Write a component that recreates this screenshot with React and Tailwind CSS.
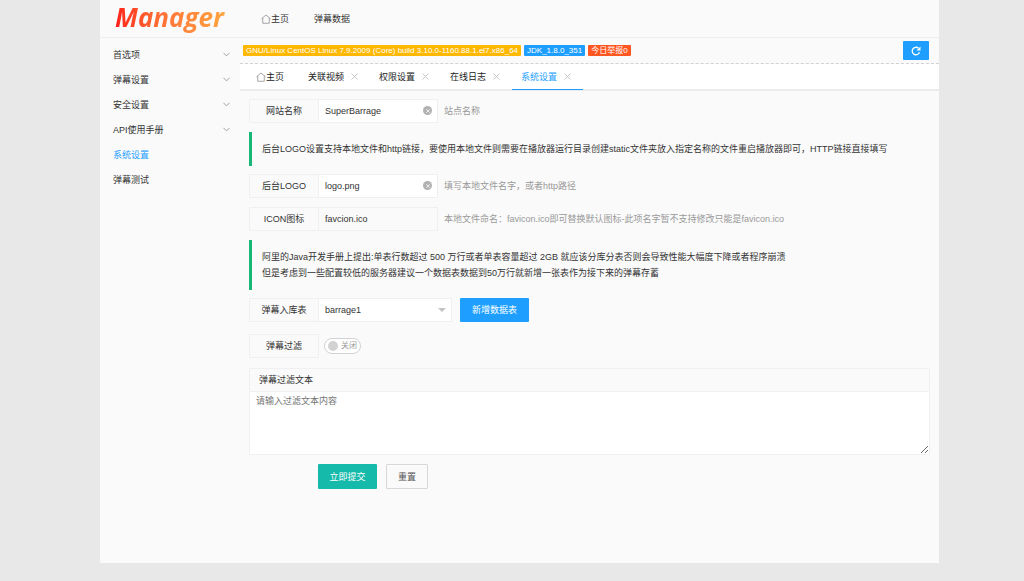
import { useState } from "react";
import { ChevronDown, X } from "lucide-react";

const menuItems = [
  { name: "首选项", expandable: true },
  { name: "弹幕设置", expandable: true },
  { name: "安全设置", expandable: true },
  { name: "API使用手册", expandable: true },
  { name: "系统设置" },
  { name: "弹幕测试" },
];

const closableTabs = ["关联视频", "权限设置", "在线日志", "系统设置"];

function HomeIcon() {
  return (
    <svg viewBox="0 0 20 20" className="size-[10px] shrink-0 text-[#888]" fill="none" stroke="currentColor" strokeWidth="1.5" aria-hidden="true">
      <path d="M1 9.5 10 2l9 7.5M3.5 8v10.5h13V8" />
    </svg>
  );
}

function Sidebar({ current, onSelect }) {
  return (
    <nav className="w-[140px] shrink-0 pt-1">
      <ul>
        {menuItems.map((item) => (
          <li key={item.name}>
            {item.expandable ? (
              <button type="button" className="flex h-[25px] w-full items-center justify-between pl-[13px] pr-[8px]">
                <span>{item.name}</span>
                <ChevronDown className="size-[11px] text-[#999]" strokeWidth={2} />
              </button>
            ) : (
              <a
                href="#"
                onClick={() => onSelect(item.name)}
                className={`flex h-[25px] items-center pl-[13px] ${current === item.name ? "text-[#1e9fff]" : ""}`}
              >
                {item.name}
              </a>
            )}
          </li>
        ))}
      </ul>
    </nav>
  );
}

function Tabs({ current, onSelect }) {
  return (
    <div className="flex h-[27px] border-b-2 border-[#ececec] bg-white pl-[7px] text-[#222]">
      <button type="button" className="flex h-[26px] w-[52px] items-center pl-[9px]">
        <HomeIcon />
        主页
      </button>
      {closableTabs.map((tab) => (
        <div
          key={tab}
          className={`flex h-[26px] w-[71px] items-center gap-[5px] border-b pl-[9px] ${
            current === tab ? "border-[#1e9fff] text-[#1e9fff]" : "border-transparent"
          }`}
        >
          <button type="button" onClick={() => onSelect(tab)}>
            {tab}
          </button>
          <button type="button" aria-label={`关闭${tab}`} className="text-[#c2c2c2]">
            <X className="size-[11px]" strokeWidth={2} />
          </button>
        </div>
      ))}
    </div>
  );
}

const labelClass =
  "flex h-6 w-[70px] shrink-0 items-center justify-center rounded-l-[1px] border border-[#f0f0f0] bg-[#fafafa]";

function TextRow({ id, label, initial, hint, readOnly }) {
  const [value, setValue] = useState(initial);

  return (
    <div className="flex items-center">
      <label htmlFor={id} className={labelClass}>
        {label}
      </label>
      <div className="relative -ml-px w-[120px] shrink-0">
        <input
          id={id}
          type="text"
          value={value}
          readOnly={readOnly}
          onChange={(e) => setValue(e.target.value)}
          className={`block h-6 w-full border border-[#f0f0f0] px-[6px] outline-none ${readOnly ? "bg-[#fafafa]" : "bg-white"}`}
        />
        {!readOnly && (
          <button
            type="button"
            aria-label="清空"
            onClick={() => setValue("")}
            className="absolute right-[6px] top-[7px] flex size-[9px] items-center justify-center rounded-full bg-[#b2b2b2] text-white"
          >
            <X className="size-[6px]" strokeWidth={3} />
          </button>
        )}
      </div>
      <span className="ml-[6px] text-[#999]">{hint}</span>
    </div>
  );
}

function Quote({ children }) {
  return (
    <blockquote className="border-l-[3px] border-[#16b777] py-[9px] pl-[10px] leading-4">{children}</blockquote>
  );
}

function SettingsForm() {
  const [filterOn, setFilterOn] = useState(false);

  return (
    <form className="px-[9px] pt-2" onSubmit={(e) => e.preventDefault()}>
      <div className="space-y-[9px]">
        <TextRow id="site" label="网站名称" initial="SuperBarrage" hint="站点名称" />
        <Quote>
          后台LOGO设置支持本地文件和http链接，要使用本地文件则需要在播放器运行目录创建static文件夹放入指定名称的文件重启播放器即可，HTTP链接直接填写
        </Quote>
      </div>
      <div className="mt-2 space-y-[9px]">
        <TextRow id="logo" label="后台LOGO" initial="logo.png" hint="填写本地文件名字，或者http路径" />
        <TextRow
          id="icon"
          label="ICON图标"
          initial="favcion.ico"
          hint="本地文件命名：favicon.ico即可替换默认图标-此项名字暂不支持修改只能是favicon.ico"
          readOnly
        />
        <Quote>
          <p>阿里的Java开发手册上提出:单表行数超过 500 万行或者单表容量超过 2GB 就应该分库分表否则会导致性能大幅度下降或者程序崩溃</p>
          <p>但是考虑到一些配置较低的服务器建议一个数据表数据到50万行就新增一张表作为接下来的弹幕存蓄</p>
        </Quote>
      </div>

      <div className="mt-2 flex items-center">
        <label htmlFor="table" className={labelClass}>
          弹幕入库表
        </label>
        <div className="relative -ml-px w-[134px]">
          <select id="table" className="block h-6 w-full appearance-none border border-[#f0f0f0] bg-white px-[6px] outline-none">
            <option>barrage1</option>
          </select>
          <svg viewBox="0 0 8 4" className="pointer-events-none absolute right-[6px] top-[10px] h-1 w-2" aria-hidden="true">
            <path d="M0 0h8L4 4z" fill="#c2c2c2" />
          </svg>
        </div>
        <button type="button" className="ml-2 h-6 w-[69px] rounded-[1px] bg-[#1e9fff] text-white">
          新增数据表
        </button>
      </div>

      <div className="mt-3 flex items-center">
        <label htmlFor="filter" className={labelClass}>
          弹幕过滤
        </label>
        <label
          className={`ml-[5px] flex h-4 w-[37px] cursor-pointer items-center gap-[3px] rounded-full border px-[3px] ${
            filterOn ? "flex-row-reverse border-[#16b777] bg-[#16b777] text-white" : "border-[#d2d2d2] bg-white text-[#999]"
          }`}
        >
          <input
            id="filter"
            type="checkbox"
            checked={filterOn}
            onChange={() => setFilterOn(!filterOn)}
            className="sr-only"
          />
          <span className={`size-[10px] shrink-0 rounded-full ${filterOn ? "bg-white" : "bg-[#d2d2d2]"}`}></span>
          <span className="text-[8px]">{filterOn ? "开启" : "关闭"}</span>
        </label>
      </div>

      <div className="mt-[10px] border border-[#f0f0f0]">
        <label htmlFor="words" className="flex h-[23px] items-center border-b border-[#f0f0f0] px-[9px]">
          弹幕过滤文本
        </label>
        <textarea
          id="words"
          placeholder="请输入过滤文本内容"
          className="block h-[62px] w-full resize-y bg-white px-[6px] py-[3px] leading-3 outline-none placeholder:text-[#757575]"
        ></textarea>
      </div>

      <div className="mt-[9px] flex gap-[9px] pl-[69px]">
        <button type="submit" className="h-[25px] w-[59px] rounded-[1px] bg-[#16baaa] text-white">
          立即提交
        </button>
        <button type="reset" className="h-[25px] w-[42px] rounded-[1px] border border-[#d8d8d8] text-[#555]">
          重置
        </button>
      </div>
    </form>
  );
}

export default function App() {
  const [current, setCurrent] = useState("系统设置");

  return (
    <div className="flex min-h-screen flex-col bg-[#e8e8e8] pb-[18px] pl-[100px] pr-[85px] font-['Liberation_Sans','Noto_Sans_CJK_SC',sans-serif] text-[9px] leading-3 text-[#333]">
      <div className="flex flex-1 flex-col bg-[#fafafa]">
        <header className="flex h-[38px] items-center border-b border-[#eee]">
          <h1 className="w-[140px] pb-[3px] pl-[15px]">
            <span className="inline-block bg-linear-to-r from-[#ff1a1a] via-[#ff7a3a] via-50% to-[#ffa640] bg-clip-text pr-1 font-['Open_Sans',sans-serif] text-[26px] font-bold italic leading-8 text-transparent">
              Manager
            </span>
          </h1>
          <nav className="flex gap-[25px] pl-[21px]">
            <a href="#" className="flex items-center">
              <HomeIcon />
              主页
            </a>
            <a href="#">弹幕数据</a>
          </nav>
        </header>

        <div className="flex flex-1">
          <Sidebar current={current} onSelect={setCurrent} />
          <main className="min-w-0 flex-1">
            <div className="flex h-[26px] items-center justify-between border-b border-dashed border-[#d2d2d2] pl-[3px] pr-[10px]">
              <div className="flex gap-[3px] whitespace-nowrap text-[8px] leading-[11px] text-white">
                <span className="rounded-[1px] bg-[#ffb800] px-[3px]">GNU/Linux CentOS Linux 7.9.2009 (Core) build 3.10.0-1160.88.1.el7.x86_64</span>
                <span className="rounded-[1px] bg-[#1e9fff] px-[3px]">JDK_1.8.0_351</span>
                <span className="rounded-[1px] bg-[#ff5722] px-[3px]">今日举报0</span>
              </div>
              <button
                type="button"
                aria-label="刷新"
                className="flex h-[19px] w-[26px] items-center justify-center rounded-[1px] bg-[#1e9fff] text-white"
              >
                <svg viewBox="0 0 20 20" className="size-[10px]" aria-hidden="true">
                  <path d="M17 12.5a7.5 7.5 0 1 1-2-8" fill="none" stroke="currentColor" strokeWidth="2.6" />
                  <path d="M19 1v8h-8z" fill="currentColor" />
                </svg>
              </button>
            </div>
            <Tabs current={current} onSelect={setCurrent} />
            <SettingsForm />
          </main>
        </div>
      </div>
    </div>
  );
}
